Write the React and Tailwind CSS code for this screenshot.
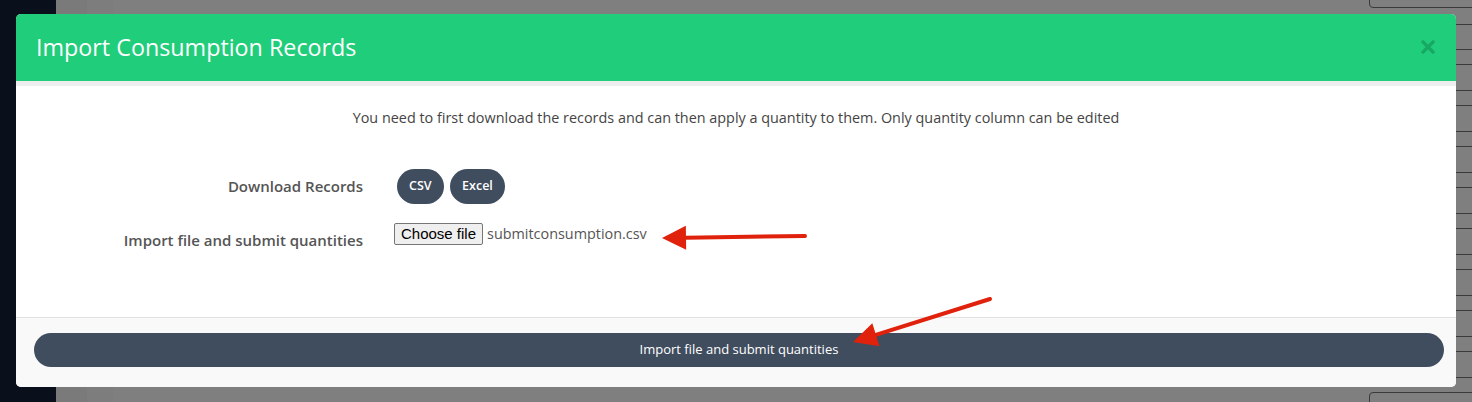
const rows = [24, 49, 64, 90, 105, 131, 146, 172, 187, 213, 228, 254, 269, 295, 310, 336, 351, 377];

function Arrow({ x1, y1, x2, y2 }) {
  const ang = Math.atan2(y2 - y1, x2 - x1);
  const len = 24;
  const w = 12;
  const bx = x2 - Math.cos(ang) * len;
  const by = y2 - Math.sin(ang) * len;
  const px = -Math.sin(ang) * w;
  const py = Math.cos(ang) * w;
  return (
    <g>
      <line x1={x1} y1={y1} x2={bx} y2={by} stroke="#e0210b" strokeWidth="4" strokeLinecap="round" />
      <polygon points={`${x2},${y2} ${bx + px},${by + py} ${bx - px},${by - py}`} fill="#e0210b" />
    </g>
  );
}

export default function App() {
  return (
    <div className="relative w-[1472px] h-[402px] overflow-hidden flex bg-[#7f7f7f] font-['Open_Sans',sans-serif]">
      {/* page behind the dialog */}
      <div className="w-[56px] h-full bg-[#09101b]" />
      <div className="w-[31px] h-full bg-[#7a7a7a]" />
      <div className="w-[26px] h-full bg-[#7d7d7d]" />
      <div className="flex-1 relative">
        {rows.map((y) => (
          <div key={y} className="absolute left-[1340px] right-0 h-px bg-[#3a3a3a]" style={{ top: y }} />
        ))}
        <div className="absolute left-[1256px] top-[-4px] w-[120px] h-[12px] border border-[#3a3a3a] rounded-sm" />
        <div className="absolute left-[1256px] top-[392px] w-[120px] h-[20px] border border-[#3a3a3a] rounded-sm" />
      </div>

      {/* dialog */}
      <div className="absolute left-[16px] top-[14px] w-[1440px] h-[373px] rounded-[5px] overflow-hidden flex flex-col bg-white">
        <div className="h-[67px] bg-[#20cd7a] flex items-center justify-between pl-[20px] pr-[21px]">
          <h2 className="text-[23.3px] text-white font-normal">Import Consumption Records</h2>
          <svg width="14" height="14" viewBox="0 0 14 14" className="mt-[-2px]">
            <path d="M2 2 L12 12 M12 2 L2 12" stroke="#17a862" strokeWidth="3.2" strokeLinecap="square" />
          </svg>
        </div>
        <div className="h-[5px] bg-[#eeeeee]" />
        <div className="flex-1 flex flex-col border-b border-[#e2e2e2]">
          <p className="text-center text-[14.4px] text-[#444] mt-[22px] leading-[20px]">
            You need to first download the records and can then apply a quantity to them. Only quantity column can be edited
          </p>
          <div className="flex items-center mt-[41px]">
            <div className="w-[347px] text-right text-[15px] font-semibold text-[#555]">Download Records</div>
            <div className="flex gap-[6px] ml-[34px]">
              <button className="h-[35px] px-[12px] rounded-full bg-[#3f4d5e] text-white text-[12.5px] font-semibold">CSV</button>
              <button className="h-[35px] px-[12.5px] rounded-full bg-[#3f4d5e] text-white text-[12.5px] font-semibold">Excel</button>
            </div>
          </div>
          <div className="flex items-end mt-[19px]">
            <div className="w-[347px] text-right text-[15px] font-semibold text-[#555] leading-[20px]">Import file and submit quantities</div>
            <div className="flex items-center ml-[31px] mb-[5px]">
              <span className="h-[22px] px-[6px] flex items-center bg-[#efefef] border border-[#767676] rounded-[2px] text-[15px] text-black font-['Liberation_Sans',sans-serif]">
                Choose file
              </span>
              <span className="ml-[4px] text-[14.4px] text-[#555]">submitconsumption.csv</span>
            </div>
          </div>
        </div>
        <div className="h-[69px] bg-[#f9f9f9] pt-[15px] pl-[18px] pr-[12px]">
          <button className="w-full h-[34px] rounded-full bg-[#3f4d5e] text-white text-[13px]">
            Import file and submit quantities
          </button>
        </div>
      </div>

      {/* annotation arrows */}
      <svg className="absolute left-0 top-0 pointer-events-none" width="1472" height="402">
        <Arrow x1={805} y1={236} x2={662} y2={238} />
        <Arrow x1={990} y1={299} x2={853} y2={342} />
      </svg>
    </div>
  );
}
